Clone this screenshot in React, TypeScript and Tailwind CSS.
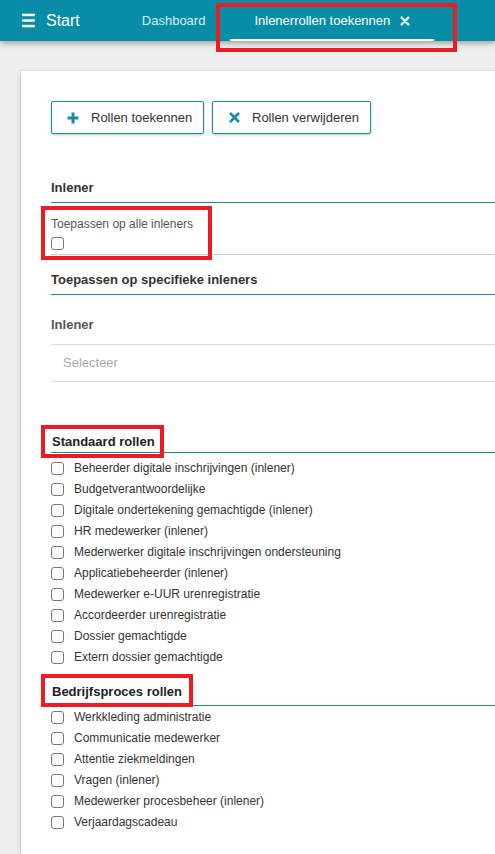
import { Menu } from 'lucide-react'

const STANDAARD = [
  'Beheerder digitale inschrijvingen (inlener)',
  'Budgetverantwoordelijke',
  'Digitale ondertekening gemachtigde (inlener)',
  'HR medewerker (inlener)',
  'Mederwerker digitale inschrijvingen ondersteuning',
  'Applicatiebeheerder (inlener)',
  'Medewerker e-UUR urenregistratie',
  'Accordeerder urenregistratie',
  'Dossier gemachtigde',
  'Extern dossier gemachtigde',
]

const BEDRIJF = [
  'Werkkleding administratie',
  'Communicatie medewerker',
  'Attentie ziekmeldingen',
  'Vragen (inlener)',
  'Medewerker procesbeheer (inlener)',
  'Verjaardagscadeau',
]

function XIcon({ className }: { className?: string }) {
  return (
    <svg viewBox="0 0 12 12" className={className}>
      <path d="M2 2 L10 10 M10 2 L2 10" stroke="currentColor" strokeWidth="3" strokeLinecap="round" fill="none" />
    </svg>
  )
}

function PlusIcon({ className }: { className?: string }) {
  return (
    <svg viewBox="0 0 12 12" className={className}>
      <path d="M6 0.5 V11.5 M0.5 6 H11.5" stroke="currentColor" strokeWidth="3" fill="none" />
    </svg>
  )
}

// plain unchecked box, drawn like the browser default but a bit softer
function Box() {
  return <span className="block w-[13px] h-[13px] shrink-0 border border-[#777] rounded-[3px] bg-white" />
}

function RoleList({ items }: { items: string[] }) {
  return (
    <div>
      {items.map((r) => (
        <label key={r} className="flex items-center h-[21px] text-[12px] text-[#333]">
          <Box />
          <span className="ml-[10px] leading-[21px]">{r}</span>
        </label>
      ))}
    </div>
  )
}

export default function App() {
  return (
    <div className="h-[854px] w-[495px] overflow-hidden bg-[#eeeeee] font-['Liberation_Sans',Arial,sans-serif] flex flex-col">
      <header className="relative z-10 h-[41px] bg-[#088da7] shadow-[0_2px_6px_rgba(0,0,0,0.35)] flex items-center shrink-0">
        <div className="flex items-center pl-[19px]">
          <Menu size={19} strokeWidth={3.2} className="text-white" strokeLinecap="butt" />
          <span className="ml-[8px] text-white text-[16px] leading-none">Start</span>
        </div>
        <span className="ml-[62px] text-[13px] text-[#d4ecf1]">Dashboard</span>
        <div className="relative ml-[25px] h-full flex items-center px-[24px]">
          <span className="text-[13px] text-white">Inlenerrollen toekennen</span>
          <XIcon className="ml-[10px] w-[10px] h-[10px] text-[#d4ecf1]" />
          <div className="absolute left-0 right-0 bottom-0 h-[2px] bg-white" />
          <div className="absolute left-[-14px] right-[-23px] top-[3px] h-[49px] border-[4px] border-[#ed1c24]" />
        </div>
      </header>

      <main className="flex-1 mt-[30px] ml-[21px] bg-white shadow-[0_1px_4px_rgba(0,0,0,0.25)] pt-[30px] pl-[30px]">
        <div className="flex gap-[8px]">
          <button className="h-[33px] w-[153px] flex items-center pl-[15px] border border-[#1a8ea6] rounded-[2px] shadow-[0_1px_3px_rgba(0,0,0,0.25)] bg-white text-[13px] text-[#333]">
            <PlusIcon className="w-[12px] h-[12px] text-[#1a8ea6]" />
            <span className="ml-[12px]">Rollen toekennen</span>
          </button>
          <button className="h-[33px] w-[159px] flex items-center pl-[16px] border border-[#1a8ea6] rounded-[2px] shadow-[0_1px_3px_rgba(0,0,0,0.25)] bg-white text-[13px] text-[#333]">
            <XIcon className="w-[11px] h-[11px] text-[#1a8ea6]" />
            <span className="ml-[12px]">Rollen verwijderen</span>
          </button>
        </div>

        <div className="mt-[43px] leading-[22px] pb-[3px] border-b border-[#1a8aa0] text-[13px] font-bold text-[#333]">
          Inlener
        </div>

        <div className="relative pt-[13px] pb-[4px] border-b border-[#d0d0d0]">
          <div className="text-[12px] leading-[16px] text-[#555]">Toepassen op alle inleners</div>
          <div className="mt-[5px] flex">
            <Box />
          </div>
          <div className="absolute left-[-10px] top-[3px] w-[171px] h-[54px] border-[4px] border-[#ed1c24]" />
        </div>

        <div className="mt-[14px] leading-[22px] pb-[3px] border-b border-[#1a8aa0] text-[13px] font-bold text-[#333]">
          Toepassen op specifieke inleners
        </div>

        <div className="mt-[19px] leading-[22px] pb-[8px] border-b border-[#dddddd] text-[13px] font-bold text-[#555]">
          Inlener
        </div>
        <div className="h-[37px] flex items-center pl-[12px] border-b border-[#dddddd] text-[13px] text-[#aaa]">
          Selecteer
        </div>

        <div className="relative mt-[50px] leading-[20px] border-b border-[#1a8aa0] text-[13px] font-bold text-[#222] pl-[1px]">
          Standaard rollen
          <div className="absolute left-[-10px] top-[-7px] w-[123px] h-[33px] border-[4px] border-[#ed1c24] pointer-events-none" />
        </div>
        <div className="mt-[5px]">
          <RoleList items={STANDAARD} />
        </div>

        <div className="relative mt-[14px] leading-[20px] pb-[3px] border-b border-[#1a8aa0] text-[13px] font-bold text-[#222] pl-[1px]">
          Bedrijfsproces rollen
          <div className="absolute left-[-10px] top-[-8px] w-[152px] h-[33px] border-[4px] border-[#ed1c24] pointer-events-none" />
        </div>
        <div className="mt-[1px]">
          <RoleList items={BEDRIJF} />
        </div>
      </main>
    </div>
  )
}
